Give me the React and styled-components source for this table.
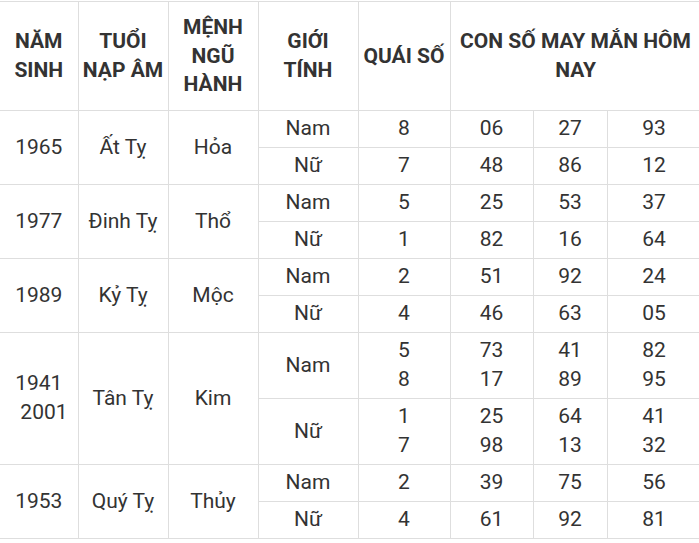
import React from "react";
import styled, { createGlobalStyle } from "styled-components";

const GlobalStyle = createGlobalStyle`
    html, body {
        margin: 0;
        padding: 0;
        background: #fff;
        overflow: hidden;
    }
    body {
        font-family: Roboto, "Noto Sans", Arial, sans-serif;
        color: #333;
    }
`;

const Wrapper = styled.div`
    width: 699px;
    overflow: hidden;
    padding-top: 1px;
`;

const Table = styled.table`
    width: 701px;
    border-collapse: collapse;
    table-layout: fixed;
    border-left: hidden;
    font-size: 21px;
    line-height: 29px;
    color: #333;
`;

const HeadCell = styled.th`
    border: 1px solid #dedede;
    padding: 11px 4px;
    font-weight: 700;
    text-align: center;
    vertical-align: middle;
    line-height: 28.5px;
`;

const Cell = styled.td`
    border: 1px solid #dedede;
    padding: 3.5px 2px;
    font-weight: 400;
    text-align: center;
    vertical-align: middle;
`;

const Line = styled.span`
    display: block;
    white-space: pre;
`;

const colWidths = [78, 90, 90, 100, 92, 83, 74, 94];

const data = [
    {
        years: ["1965"], tuoi: "Ất Tỵ", menh: "Hỏa",
        rows: [
            { gioi: "Nam", quai: ["8"], nums: [["06"], ["27"], ["93"]] },
            { gioi: "Nữ", quai: ["7"], nums: [["48"], ["86"], ["12"]] },
        ],
    },
    {
        years: ["1977"], tuoi: "Đinh Tỵ", menh: "Thổ",
        rows: [
            { gioi: "Nam", quai: ["5"], nums: [["25"], ["53"], ["37"]] },
            { gioi: "Nữ", quai: ["1"], nums: [["82"], ["16"], ["64"]] },
        ],
    },
    {
        years: ["1989"], tuoi: "Kỷ Tỵ", menh: "Mộc",
        rows: [
            { gioi: "Nam", quai: ["2"], nums: [["51"], ["92"], ["24"]] },
            { gioi: "Nữ", quai: ["4"], nums: [["46"], ["63"], ["05"]] },
        ],
    },
    {
        years: ["1941", "\u00a0\u00a02001"], tuoi: "Tân Tỵ", menh: "Kim",
        rows: [
            { gioi: "Nam", quai: ["5", "8"], nums: [["73", "17"], ["41", "89"], ["82", "95"]] },
            { gioi: "Nữ", quai: ["1", "7"], nums: [["25", "98"], ["64", "13"], ["41", "32"]] },
        ],
    },
    {
        years: ["1953"], tuoi: "Quý Tỵ", menh: "Thủy",
        rows: [
            { gioi: "Nam", quai: ["2"], nums: [["39"], ["75"], ["56"]] },
            { gioi: "Nữ", quai: ["4"], nums: [["61"], ["92"], ["81"]] },
        ],
    },
];

const Lines = ({ items }) => items.map((t, i) => <Line key={i}>{t}</Line>);

const App = () => {
    return (
        <>
            <GlobalStyle />
            <Wrapper>
                <Table>
                    <colgroup>
                        {colWidths.map((w, i) => <col key={i} style={{ width: w }} />)}
                    </colgroup>
                    <thead>
                        <tr>
                            <HeadCell>NĂM SINH</HeadCell>
                            <HeadCell>TUỔI NẠP ÂM</HeadCell>
                            <HeadCell>MỆNH NGŨ HÀNH</HeadCell>
                            <HeadCell>GIỚI TÍNH</HeadCell>
                            <HeadCell>QUÁI SỐ</HeadCell>
                            <HeadCell colSpan={3}>CON SỐ MAY MẮN HÔM NAY</HeadCell>
                        </tr>
                    </thead>
                    <tbody>
                        {data.map((group) =>
                            group.rows.map((row, idx) => (
                                <tr key={group.years[0] + row.gioi}>
                                    {idx === 0 && (
                                        <>
                                            <Cell rowSpan={2}><Lines items={group.years} /></Cell>
                                            <Cell rowSpan={2}>{group.tuoi}</Cell>
                                            <Cell rowSpan={2}>{group.menh}</Cell>
                                        </>
                                    )}
                                    <Cell>{row.gioi}</Cell>
                                    <Cell><Lines items={row.quai} /></Cell>
                                    {row.nums.map((n, i) => (
                                        <Cell key={i}><Lines items={n} /></Cell>
                                    ))}
                                </tr>
                            ))
                        )}
                    </tbody>
                </Table>
            </Wrapper>
        </>
    );
};

export default App;
